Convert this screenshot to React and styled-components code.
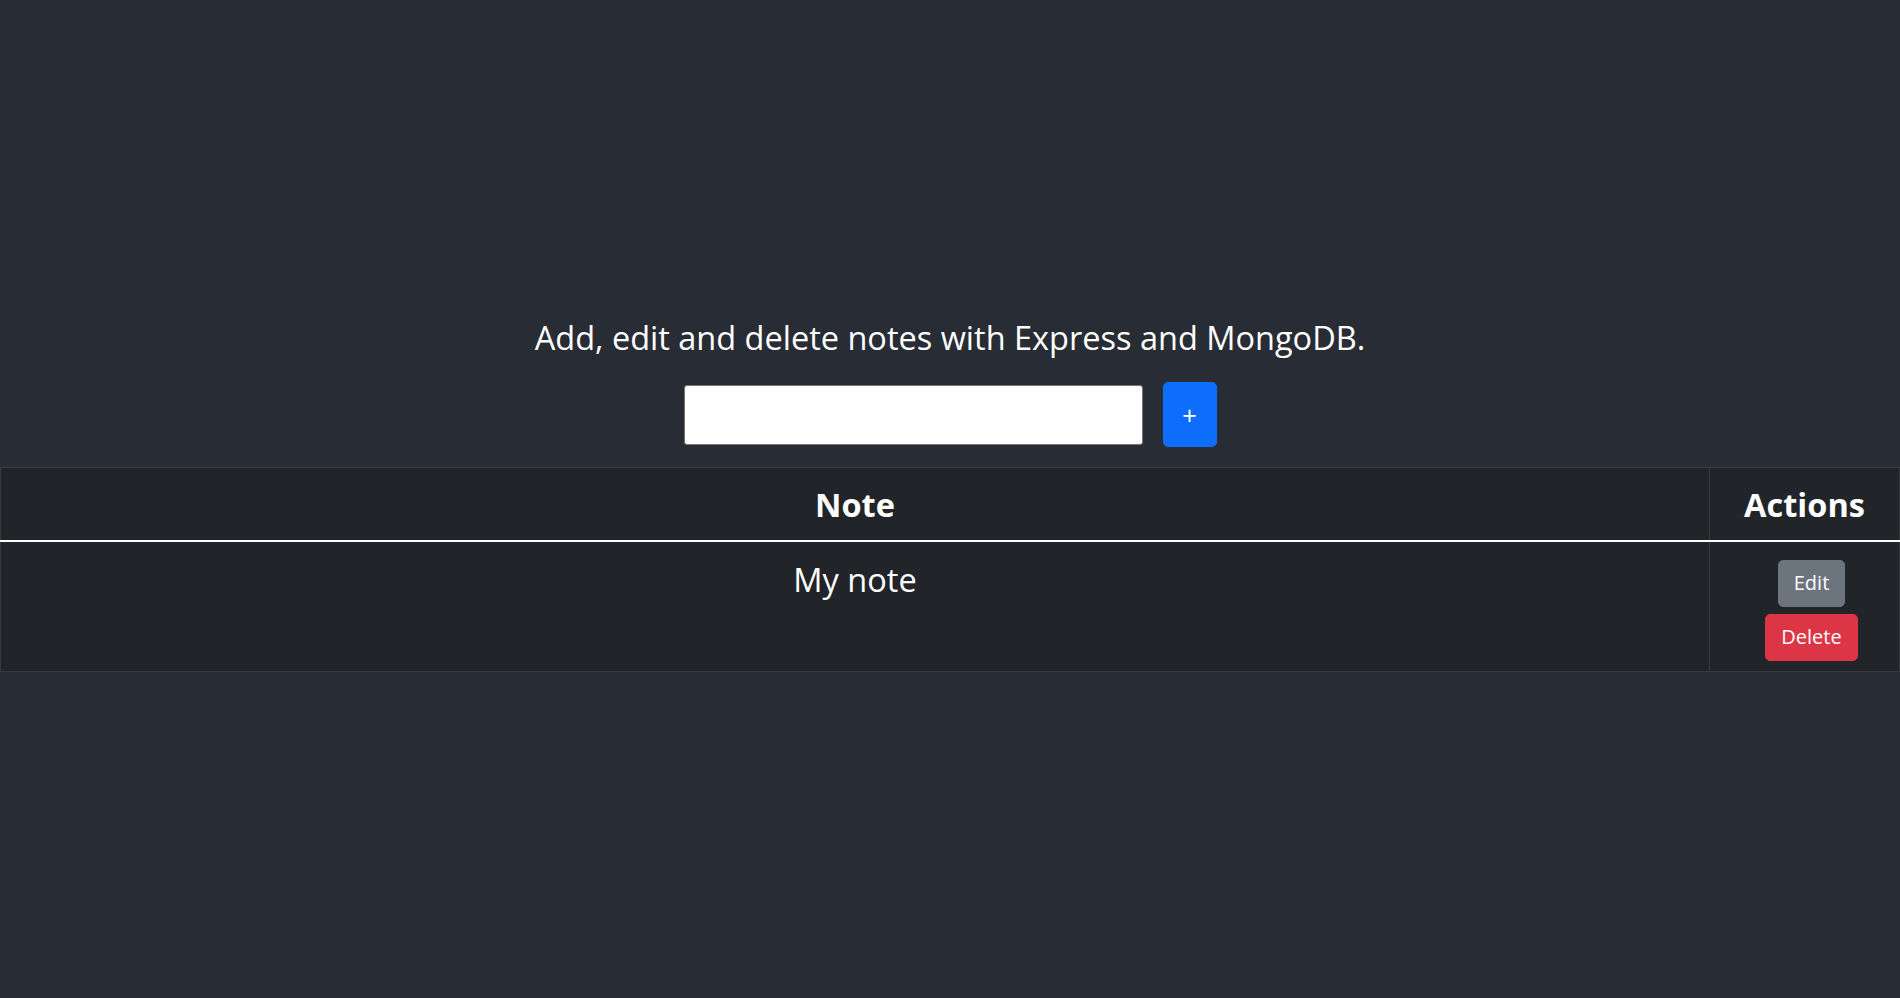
import React, { useState } from "react";
import styled, { createGlobalStyle } from "styled-components";

const GlobalStyle = createGlobalStyle`
  html, body {
    margin: 0;
    padding: 0;
    background: #282c34;
  }
  * { box-sizing: border-box; }
`;

const Page = styled.div`
  min-height: 100vh;
  display: flex;
  flex-direction: column;
  align-items: center;
  justify-content: center;
  background: #282c34;
  color: #fff;
  font-family: "Open Sans", "Noto Sans", sans-serif;
  font-size: 32.5px;
  line-height: 1.5;
`;

const Title = styled.p`
  margin: 0 0 19px;
`;

const Form = styled.form`
  display: flex;
  align-items: center;
  gap: 20px;
  margin-bottom: 20px;
`;

const Input = styled.input`
  width: 459px;
  height: 60px;
  border: 1px solid #767676;
  border-radius: 3px;
  background: #fff;
  font: inherit;
  font-size: 20px;
  padding: 0 10px;
`;

const Button = styled.button`
  border: 1px solid ${(p) => p.$bg};
  background: ${(p) => p.$bg};
  color: #fff;
  border-radius: 5px;
  font-family: "Open Sans", "Noto Sans", sans-serif;
  font-size: 20px;
  line-height: 30px;
  padding: 7.5px 15px;
  height: 47px;
  cursor: pointer;
`;

const AddButton = styled(Button)`
  width: 54px;
  height: 65px;
  padding: 0;
  font-size: 26px;
  line-height: 1;
`;

const Table = styled.table`
  width: 100%;
  table-layout: fixed;
  border-collapse: collapse;
  background: #212529;
  margin-bottom: 12px;
`;

const Th = styled.th`
  width: ${(p) => p.$w || "auto"};
  border: 1px solid #373b3e;
  border-bottom: 2px solid #fff;
  padding: 13px 10px 10px;
  font-weight: 700;
  text-align: center;
  vertical-align: top;
`;

const Td = styled.td`
  border: 1px solid #373b3e;
  border-top: none;
  padding: ${(p) => (p.$text ? "14px 10px 10px" : "10px")};
  text-align: center;
  vertical-align: top;
`;

const Actions = styled.div`
  display: flex;
  flex-direction: column;
  align-items: center;
  gap: 7px;
  padding: 8px 0 0 14px;
`;

export default function App() {
  const [notes] = useState([{ id: 1, text: "My note" }]);
  const [value, setValue] = useState("");

  return (
    <Page>
      <GlobalStyle />
      <Title>Add, edit and delete notes with Express and MongoDB.</Title>
      <Form onSubmit={(e) => e.preventDefault()}>
        <Input value={value} onChange={(e) => setValue(e.target.value)} />
        <AddButton type="submit" $bg="#0d6efd">+</AddButton>
      </Form>
      <Table>
        <thead>
          <tr>
            <Th>Note</Th>
            <Th $w="190px">Actions</Th>
          </tr>
        </thead>
        <tbody>
          {notes.map((n) => (
            <tr key={n.id}>
              <Td $text>{n.text}</Td>
              <Td>
                <Actions>
                  <Button $bg="#6c757d">Edit</Button>
                  <Button $bg="#dc3545">Delete</Button>
                </Actions>
              </Td>
            </tr>
          ))}
        </tbody>
      </Table>
    </Page>
  );
}
